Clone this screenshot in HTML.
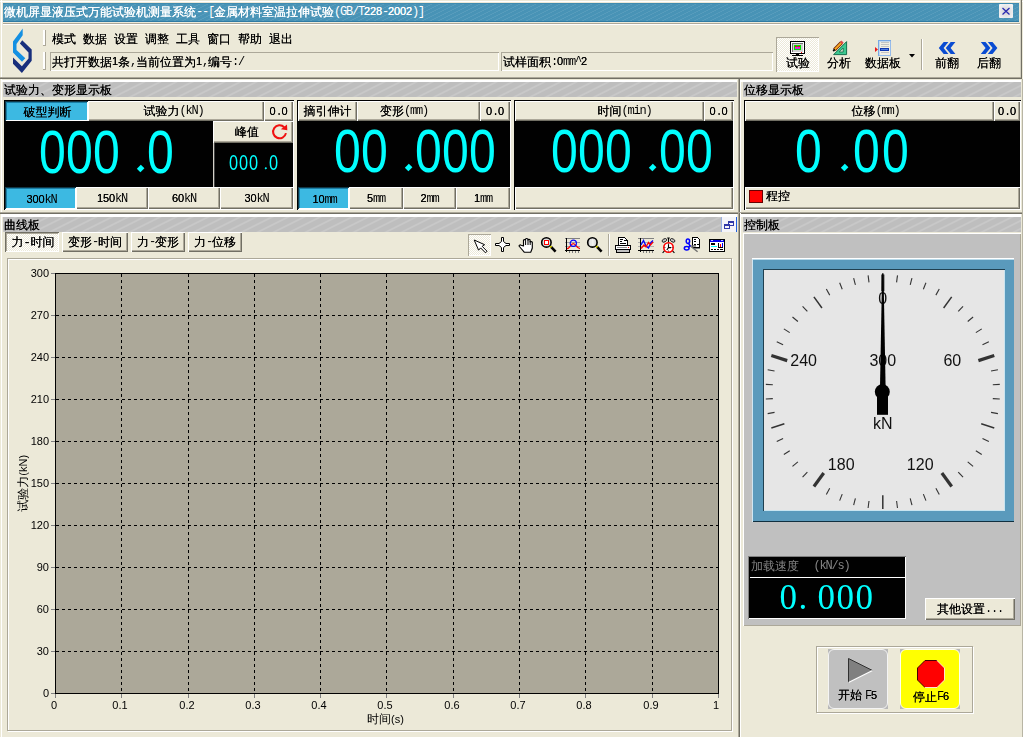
<!DOCTYPE html><html><head><meta charset="utf-8"><title>微机屏显液压式万能试验机测量系统</title><style>
html,body{margin:0;padding:0}
body{width:1023px;height:737px;background:#ece9d8;position:relative;overflow:hidden;opacity:.999;
 font:12px/12px "Liberation Mono","WenQuanYi Zen Hei","Noto Sans CJK SC",sans-serif;color:#000}
div,svg{position:absolute;box-sizing:border-box}
span.l{letter-spacing:-1.2px;position:relative;top:-1px;text-shadow:none}
span.d{font-family:"Liberation Sans",sans-serif;font-size:11px;letter-spacing:-.12px;text-shadow:0 0 0}
.t{white-space:nowrap;height:12px;line-height:12px;text-shadow:0 0 0}
.c{white-space:nowrap;text-align:center;line-height:12px;text-shadow:0 0 0}
.hdr{background:#bebebe repeating-linear-gradient(153.43deg,rgba(255,255,255,0) 0,rgba(255,255,255,0) 4.4px,rgba(255,255,255,.16) 5.4px,rgba(255,255,255,.16) 6.2px,rgba(255,255,255,0) 7.16px)}
.up{background:#ece9d8;box-shadow:inset 1px 1px #fff,inset -1px -1px #716f64,inset -2px -2px #aca899}
.dn{background:#3cb9e2;box-shadow:inset 1px 1px #103848,inset -1px -1px #fff,inset 2px 2px #1a7ea6}
.blk{background:#000}
.seg{color:#0ff;font-family:"Liberation Sans",sans-serif;white-space:nowrap;transform-origin:0 0}
</style></head><body>
<div class="" style="left:0px;top:1px;width:1023px;height:1px;background:#fff"></div>
<div class="" style="left:1px;top:0px;width:1px;height:737px;background:#fff"></div>
<div class="" style="left:1020px;top:0px;width:1px;height:79px;background:#d2cfbf"></div>
<div class="" style="left:1021px;top:0px;width:1px;height:79px;background:#716f64"></div>
<div class="" style="left:1022px;top:79px;width:1px;height:658px;background:#b8b5a4"></div>
<div class="" style="left:3px;top:3px;width:1016px;height:19px;background:#4893b6 repeating-linear-gradient(153.43deg,rgba(255,255,255,0) 0,rgba(255,255,255,0) 2.3px,rgba(255,255,255,.09) 2.9px,rgba(255,255,255,.09) 3.3px,rgba(255,255,255,0) 3.58px);box-shadow:inset 0 1px #3f8bb0,inset 0 -1px #2f7ba4"></div>
<div class="t" style="left:4px;top:6px;color:#fff">微机屏显液压式万能试验机测量系统<span class="l">--[</span>金属材料室温拉伸试验<span class="l">(GB/T<span class="d">228</span>-<span class="d">2002</span>)]</span></div>
<div class="" style="left:999px;top:4px;width:14px;height:14px;background:radial-gradient(circle at 50% 55%,#cfcfd2 0,#e4e4e6 45%,#fafafa 100%);border-radius:1px"><svg width="14" height="14" viewBox="0 0 14 14" style="left:0;top:0"><path d="M3.5 4 L10.5 10.5 M10.5 4 L3.5 10.5" stroke="#2828b0" stroke-width="1.25" fill="none"/></svg></div>
<div class="" style="left:3px;top:23px;width:1017px;height:1px;background:#aca899"></div>
<div class="" style="left:3px;top:24px;width:1017px;height:1px;background:#fff"></div>
<svg style="left:10px;top:26px" width="26" height="50" viewBox="10 26 26 50"><polygon points="22.7,28.6 22.7,35.2 16.5,44 16.5,50 25.3,58.2 22,61.7 13,52.6 13,41.4" fill="#1490e2"/><polygon points="22.2,40.2 31.7,49.4 31.7,60.8 21.9,73 13,63.8 13,57.6 21.9,66.2 28.5,58.6 28.5,52.4 19.9,43.6" fill="#182f7c"/></svg>
<div class="" style="left:43px;top:30px;width:2px;height:16px;background:#fff"></div>
<div class="" style="left:45px;top:30px;width:1px;height:16px;background:#aca899"></div>
<div class="" style="left:43px;top:45px;width:3px;height:1px;background:#aca899"></div>
<div class="" style="left:43px;top:52px;width:2px;height:18px;background:#fff"></div>
<div class="" style="left:45px;top:52px;width:1px;height:18px;background:#aca899"></div>
<div class="" style="left:43px;top:69px;width:3px;height:1px;background:#aca899"></div>
<div class="t" style="left:52px;top:34px;">模式</div>
<div class="t" style="left:83px;top:34px;">数据</div>
<div class="t" style="left:114px;top:34px;">设置</div>
<div class="t" style="left:145px;top:34px;">调整</div>
<div class="t" style="left:176px;top:34px;">工具</div>
<div class="t" style="left:207px;top:34px;">窗口</div>
<div class="t" style="left:238px;top:34px;">帮助</div>
<div class="t" style="left:269px;top:34px;">退出</div>
<div class="" style="left:50px;top:52px;width:449px;height:19px;box-shadow:inset 1px 1px #aca899,inset -1px -1px #fff;"></div>
<div class="t" style="left:52px;top:56px;">共打开数据<span class="l"><span class="d">1</span></span>条<span class="l">,</span>当前位置为<span class="l"><span class="d">1</span>,</span>编号<span class="l">:/</span></div>
<div class="" style="left:501px;top:52px;width:272px;height:19px;box-shadow:inset 1px 1px #aca899,inset -1px -1px #fff;"></div>
<div class="t" style="left:503px;top:56px;">试样面积<span class="l">:<span class="d">0</span>mm^<span class="d">2</span></span></div>
<div class="" style="left:776px;top:37px;width:43px;height:35px;background:repeating-conic-gradient(#fff 0 25%,#ece9d8 0 50%) 0 0/2px 2px;box-shadow:inset 1px 1px #aca899,inset -1px -1px #fff"></div>
<div class="t" style="left:786px;top:58px;">试验</div>
<div class="t" style="left:827px;top:58px;">分析</div>
<div class="t" style="left:865px;top:58px;">数据板</div>
<div class="t" style="left:935px;top:58px;">前翻</div>
<div class="t" style="left:977px;top:58px;">后翻</div>
<svg style="left:790px;top:41px" width="16" height="16" viewBox="0 0 16 16" shape-rendering="crispEdges"><rect x="0.5" y="0.5" width="14" height="12" fill="#fff" stroke="#000"/><rect x="2" y="2" width="11" height="9" fill="#707070"/><rect x="3" y="3" width="10" height="8" fill="#d0d0d0"/><rect x="4" y="4" width="7" height="5" fill="#00e000"/><rect x="5" y="5" width="2" height="1" fill="#f00"/><rect x="8" y="5" width="2" height="1" fill="#f00"/><rect x="5" y="6" width="5" height="2" fill="#e020e0"/><rect x="11" y="11" width="1" height="1" fill="#f00"/><rect x="6" y="13" width="3" height="1" fill="#000"/><rect x="2" y="14" width="11" height="1" fill="#000"/></svg>
<svg style="left:832px;top:40px" width="17" height="17" viewBox="0 0 17 17"><polygon points="14.6,1.6 14.6,14.6 1.6,14.6" fill="#3cc890" stroke="#187050" stroke-width="1"/><polygon points="11.2,8 11.2,12 7.2,12" fill="#ece9d8" stroke="#187050" stroke-width=".9"/><path d="M2.4 9.8 L9.6 2.6" stroke="#702000" stroke-width="3.6" stroke-linecap="butt"/><path d="M2.6 9.6 L9.4 2.8" stroke="#f8a820" stroke-width="2"/><path d="M1.2 11 L2.8 9.4" stroke="#000" stroke-width="1.8"/><path d="M9 3.2 L10.6 1.6" stroke="#e04848" stroke-width="3"/></svg>
<svg style="left:873px;top:40px" width="20" height="17" viewBox="0 0 20 17" shape-rendering="crispEdges"><rect x="5.5" y="0.5" width="12" height="15" fill="#f2efe4" stroke="#78a8e4"/><rect x="6" y="1" width="11" height="14" fill="none" stroke="#a8c8f0" stroke-width=".6"/><rect x="8" y="2" width="8" height="1" fill="#c4c4c4"/><rect x="8" y="4" width="8" height="1" fill="#c4c4c4"/><rect x="8" y="6" width="8" height="1" fill="#c4c4c4"/><rect x="8" y="12" width="8" height="1" fill="#c4c4c4"/><rect x="7" y="8" width="9" height="3" fill="#1038b0"/><rect x="8" y="9" width="7" height="1" fill="#5080e0"/><polygon points="2,7 2,12 5,9.5" fill="#e81818" shape-rendering="auto"/></svg>
<svg style="left:909px;top:54px" width="6" height="4" viewBox="0 0 6 4"><polygon points="0,0 6,0 3,3.5" fill="#000"/></svg>
<div class="" style="left:921px;top:39px;width:1px;height:31px;background:#aca899"></div>
<div class="" style="left:922px;top:39px;width:1px;height:31px;background:#fff"></div>
<svg style="left:938px;top:41px" width="19" height="14" viewBox="0 0 19 14"><g fill="#0a4cd2"><polygon points="5.7,0.9 10.4,0.9 5.6,7 10.4,13.1 5.7,13.1 0.8,7"/><polygon points="12.7,0.9 17.4,0.9 12.6,7 17.4,13.1 12.7,13.1 7.8,7"/></g></svg>
<svg style="left:980.4px;top:41px" width="19" height="14" viewBox="0 0 19 14"><g fill="#0a4cd2" transform="translate(18.2,0) scale(-1,1)"><polygon points="5.7,0.9 10.4,0.9 5.6,7 10.4,13.1 5.7,13.1 0.8,7"/><polygon points="12.7,0.9 17.4,0.9 12.6,7 17.4,13.1 12.7,13.1 7.8,7"/></g></svg>
<div class="" style="left:0px;top:77px;width:1021px;height:1px;background:#aca899"></div>
<div class="" style="left:0px;top:78px;width:1022px;height:1px;background:#716f64"></div>
<div class="" style="left:1px;top:80px;width:736px;height:2px;background:#fff"></div>
<div class="" style="left:1px;top:80px;width:1px;height:17px;background:#fff"></div>
<div class="hdr" style="left:3px;top:82px;width:734px;height:15px;"></div>
<div class="t" style="left:4px;top:85px;">试验力、变形显示板</div>
<div class="" style="left:740px;top:80px;width:281px;height:2px;background:#fff"></div>
<div class="" style="left:740px;top:80px;width:1px;height:17px;background:#fff"></div>
<div class="hdr" style="left:743px;top:82px;width:278px;height:15px;"></div>
<div class="t" style="left:744px;top:85px;">位移显示板</div>
<div class="" style="left:740px;top:80px;width:1px;height:132px;background:#fff"></div>
<div class="" style="left:738px;top:79px;width:1px;height:134px;background:#aca899"></div>
<div class="" style="left:739px;top:79px;width:1px;height:134px;background:#716f64"></div>
<div class="" style="left:4px;top:100px;width:290px;height:110px;background:#ece9d8;box-shadow:inset 1px 1px #000,inset -1px -1px #fff"></div>
<div class="blk" style="left:5px;top:121px;width:288px;height:66px;"></div>
<div class="dn" style="left:5px;top:101px;width:83px;height:20px;"><div class="c" style="left:-57.5px;top:6px;width:200px">破型判断</div></div>
<div class="up" style="left:88px;top:101px;width:176px;height:20px;"><div class="c" style="left:-14.5px;top:5px;width:200px">试验力<span class="l">(kN)</span></div></div>
<div class="up" style="left:264px;top:101px;width:29px;height:20px;"><div class="c" style="left:-85.5px;top:5px;width:200px"><span class="l"><span class="d">0</span>.<span class="d">0</span></span></div></div>
<div class="up" style="left:213px;top:121px;width:80px;height:22px;"></div>
<div class="t" style="left:235px;top:127px;">峰值</div>
<svg style="left:271px;top:123px" width="18" height="18" viewBox="0 0 18 18"><path d="M13.2 4.2 A6.5 6.5 0 1 0 14.96 10.15" fill="none" stroke="#f01010" stroke-width="2"/><polygon points="9.8,6.2 16,1.6 16.3,7.2" fill="#f01010"/></svg>
<div class="" style="left:213px;top:143px;width:80px;height:44px;background:#000;box-shadow:inset 1px 0 #d4d0c8,inset 2px 0 #404040"></div>
<div class="dn" style="left:5px;top:187px;width:71px;height:22px;"><div class="c" style="left:-63.5px;top:7px;width:200px"><span class="l"><span class="d">300</span>kN</span></div></div>
<div class="up" style="left:76px;top:187px;width:72px;height:22px;"><div class="c" style="left:-64px;top:6px;width:200px"><span class="l"><span class="d">150</span>kN</span></div></div>
<div class="up" style="left:148px;top:187px;width:72px;height:22px;"><div class="c" style="left:-64px;top:6px;width:200px"><span class="l"><span class="d">60</span>kN</span></div></div>
<div class="up" style="left:220px;top:187px;width:73px;height:22px;"><div class="c" style="left:-63.5px;top:6px;width:200px"><span class="l"><span class="d">30</span>kN</span></div></div>
<div class="seg" style="left:39.22px;top:120.93px;font-size:61.67px;line-height:61.67px;transform:scale(0.781,1)">0</div>
<div class="seg" style="left:66.22px;top:120.93px;font-size:61.67px;line-height:61.67px;transform:scale(0.781,1)">0</div>
<div class="seg" style="left:93.22px;top:120.93px;font-size:61.67px;line-height:61.67px;transform:scale(0.781,1)">0</div>
<div class="seg" style="left:132.67px;top:127.36px;font-size:52.38px;line-height:52.38px;transform-origin:7.33px 41.64px;transform:rotate(45deg)">.</div>
<div class="seg" style="left:147.22px;top:120.93px;font-size:61.67px;line-height:61.67px;transform:scale(0.781,1)">0</div>
<div class="seg" style="left:229.40px;top:151.88px;font-size:21.22px;line-height:21.22px;transform:scale(0.770,1)">0</div>
<div class="seg" style="left:239.40px;top:151.88px;font-size:21.22px;line-height:21.22px;transform:scale(0.770,1)">0</div>
<div class="seg" style="left:249.40px;top:151.88px;font-size:21.22px;line-height:21.22px;transform:scale(0.770,1)">0</div>
<div class="seg" style="left:263.10px;top:154.97px;font-size:17.14px;line-height:17.14px;transform-origin:2.40px 13.63px;transform:rotate(45deg)">.</div>
<div class="seg" style="left:269.40px;top:151.88px;font-size:21.22px;line-height:21.22px;transform:scale(0.770,1)">0</div>
<div class="" style="left:297px;top:100px;width:214px;height:110px;background:#ece9d8;box-shadow:inset 1px 1px #000,inset -1px -1px #fff"></div>
<div class="blk" style="left:298px;top:121px;width:212px;height:66px;"></div>
<div class="up" style="left:298px;top:101px;width:59px;height:20px;"><div class="c" style="left:-70.5px;top:5px;width:200px">摘引伸计</div></div>
<div class="up" style="left:357px;top:101px;width:123px;height:20px;"><div class="c" style="left:-53px;top:5px;width:200px">变形<span class="l">(mm)</span></div></div>
<div class="up" style="left:480px;top:101px;width:30px;height:20px;"><div class="c" style="left:-85px;top:5px;width:200px"><span class="l"><span class="d">0</span>.<span class="d">0</span></span></div></div>
<div class="dn" style="left:298px;top:187px;width:51px;height:22px;"><div class="c" style="left:-73.5px;top:7px;width:200px"><span class="l"><span class="d">10</span>mm</span></div></div>
<div class="up" style="left:349px;top:187px;width:54px;height:22px;"><div class="c" style="left:-73px;top:6px;width:200px"><span class="l"><span class="d">5</span>mm</span></div></div>
<div class="up" style="left:403px;top:187px;width:53px;height:22px;"><div class="c" style="left:-73.5px;top:6px;width:200px"><span class="l"><span class="d">2</span>mm</span></div></div>
<div class="up" style="left:456px;top:187px;width:54px;height:22px;"><div class="c" style="left:-73px;top:6px;width:200px"><span class="l"><span class="d">1</span>mm</span></div></div>
<div class="seg" style="left:334.22px;top:119.93px;font-size:61.67px;line-height:61.67px;transform:scale(0.781,1)">0</div>
<div class="seg" style="left:361.22px;top:119.93px;font-size:61.67px;line-height:61.67px;transform:scale(0.781,1)">0</div>
<div class="seg" style="left:400.67px;top:126.36px;font-size:52.38px;line-height:52.38px;transform-origin:7.33px 41.64px;transform:rotate(45deg)">.</div>
<div class="seg" style="left:415.22px;top:119.93px;font-size:61.67px;line-height:61.67px;transform:scale(0.781,1)">0</div>
<div class="seg" style="left:442.22px;top:119.93px;font-size:61.67px;line-height:61.67px;transform:scale(0.781,1)">0</div>
<div class="seg" style="left:469.22px;top:119.93px;font-size:61.67px;line-height:61.67px;transform:scale(0.781,1)">0</div>
<div class="" style="left:514px;top:100px;width:220px;height:110px;background:#ece9d8;box-shadow:inset 1px 1px #000,inset -1px -1px #fff"></div>
<div class="blk" style="left:515px;top:121px;width:218px;height:66px;"></div>
<div class="up" style="left:515px;top:101px;width:189px;height:20px;"><div class="c" style="left:9.5px;top:5px;width:200px">时间<span class="l">(min)</span></div></div>
<div class="up" style="left:704px;top:101px;width:29px;height:20px;"><div class="c" style="left:-85.5px;top:5px;width:200px"><span class="l"><span class="d">0</span>.<span class="d">0</span></span></div></div>
<div class="up" style="left:515px;top:187px;width:218px;height:22px;"></div>
<div class="seg" style="left:551.22px;top:119.93px;font-size:61.67px;line-height:61.67px;transform:scale(0.781,1)">0</div>
<div class="seg" style="left:578.22px;top:119.93px;font-size:61.67px;line-height:61.67px;transform:scale(0.781,1)">0</div>
<div class="seg" style="left:605.22px;top:119.93px;font-size:61.67px;line-height:61.67px;transform:scale(0.781,1)">0</div>
<div class="seg" style="left:644.67px;top:126.36px;font-size:52.38px;line-height:52.38px;transform-origin:7.33px 41.64px;transform:rotate(45deg)">.</div>
<div class="seg" style="left:659.22px;top:119.93px;font-size:61.67px;line-height:61.67px;transform:scale(0.781,1)">0</div>
<div class="seg" style="left:686.22px;top:119.93px;font-size:61.67px;line-height:61.67px;transform:scale(0.781,1)">0</div>
<div class="" style="left:744px;top:100px;width:277px;height:110px;background:#ece9d8;box-shadow:inset 1px 1px #000,inset -1px -1px #fff"></div>
<div class="blk" style="left:745px;top:121px;width:275px;height:66px;"></div>
<div class="up" style="left:745px;top:101px;width:249px;height:20px;"><div class="c" style="left:30.5px;top:5px;width:200px">位移<span class="l">(mm)</span></div></div>
<div class="up" style="left:994px;top:101px;width:26px;height:20px;"><div class="c" style="left:-87px;top:5px;width:200px"><span class="l"><span class="d">0</span>.<span class="d">0</span></span></div></div>
<div class="up" style="left:745px;top:187px;width:275px;height:22px;"></div>
<div class="" style="left:749px;top:190px;width:14px;height:13px;background:#f00;border:1px solid #600"></div>
<div class="t" style="left:766px;top:191px;">程控</div>
<div class="seg" style="left:795.22px;top:119.93px;font-size:61.67px;line-height:61.67px;transform:scale(0.781,1)">0</div>
<div class="seg" style="left:836.67px;top:126.36px;font-size:52.38px;line-height:52.38px;transform-origin:7.33px 41.64px;transform:rotate(45deg)">.</div>
<div class="seg" style="left:853.22px;top:119.93px;font-size:61.67px;line-height:61.67px;transform:scale(0.781,1)">0</div>
<div class="seg" style="left:882.22px;top:119.93px;font-size:61.67px;line-height:61.67px;transform:scale(0.781,1)">0</div>
<div class="" style="left:0px;top:212px;width:1022px;height:1px;background:#aca899"></div>
<div class="" style="left:0px;top:213px;width:1022px;height:1px;background:#716f64"></div>
<div class="" style="left:1px;top:214px;width:736px;height:3px;background:#fff"></div>
<div class="" style="left:1px;top:215px;width:1px;height:17px;background:#fff"></div>
<div class="hdr" style="left:3px;top:217px;width:734px;height:15px;"></div>
<div class="t" style="left:4px;top:220px;">曲线板</div>
<div class="" style="left:738px;top:213px;width:1px;height:524px;background:#aca899"></div>
<div class="" style="left:739px;top:213px;width:1px;height:524px;background:#716f64"></div>
<div class="" style="left:740px;top:213px;width:1px;height:524px;background:#fff"></div>
<div class="" style="left:721px;top:217px;width:16px;height:15px;background:#f4f4f8;border-right:1px solid #2060e0;border-left:1px solid #9ab0e0"><svg style="left:2px;top:2px" width="12" height="11" viewBox="0 0 12 11" shape-rendering="crispEdges"><g fill="none" stroke="#3038a8"><rect x="4.5" y="2.5" width="5" height="4" stroke-width="1"/><rect x="4" y="2" width="6" height="2" fill="#3038a8" stroke="none"/><rect x="0.5" y="5.5" width="5" height="4" fill="#f4f4f8"/><rect x="0" y="5" width="6" height="2" fill="#3038a8" stroke="none"/></g></svg></div>
<div class="" style="left:5px;top:232px;width:54px;height:20px;background:repeating-conic-gradient(#fff 0 25%,#ece9d8 0 50%) 0 0/2px 2px;box-shadow:inset 1px 1px #716f64,inset -1px -1px #fff,inset 2px 2px #aca899"><div class="c" style="left:1px;top:5px;width:54px">力-时间</div></div>
<div class="up" style="left:62px;top:232px;width:66px;height:20px;"><div class="c" style="left:-67px;top:5px;width:200px">变形<span class="l">-</span>时间</div></div>
<div class="up" style="left:131px;top:232px;width:54px;height:20px;"><div class="c" style="left:-73px;top:5px;width:200px">力<span class="l">-</span>变形</div></div>
<div class="up" style="left:188px;top:232px;width:54px;height:20px;"><div class="c" style="left:-73px;top:5px;width:200px">力<span class="l">-</span>位移</div></div>
<div class="" style="left:468px;top:234px;width:23px;height:22px;background:repeating-conic-gradient(#fff 0 25%,#ece9d8 0 50%) 0 0/2px 2px;box-shadow:inset 1px 1px #aca899,inset -1px -1px #fff"></div>
<svg style="left:472px;top:238px" width="17" height="17" viewBox="0 0 17 17"><path d="M2.2,2 L12.6,6.7 L10.2,8.3 L15,13.2 L13.5,14.8 L8.6,9.9 L6.6,12.2 Z" fill="#fff" stroke="#000" stroke-width="1" stroke-linejoin="miter"/></svg>
<svg style="left:494px;top:236px" width="18" height="18" viewBox="0 0 18 18"><path d="M7.5,1.5 h2 v4 l2.5,2 h3.5 v2 h-3.5 l-2.5,2 v4 h-2 v-4 l-2.5,-2 h-3.5 v-2 h3.5 l2.5,-2 z" fill="#fff" stroke="#000" stroke-width="1"/></svg>
<svg style="left:517px;top:237px" width="18" height="17" viewBox="0 0 18 17"><path d="M6.5,9 V3.2 q1,-1.2 2,0 V2.2 q1.2,-1.4 2.4,0 V3 q1.1,-1.2 2.2,0 V5 q1.2,-1 2.2,0.2 V11 q-0.6,2 -1.6,4.2 H7.2 Q5,12.5 2,9 q0.6,-1.6 2.2,-0.8 Z" fill="#fff" stroke="#000" stroke-width="1.15" stroke-linejoin="round"/><path d="M8.6,3.4 V8 M11,3 V8 M13.2,4 V8" stroke="#000" stroke-width="1" fill="none"/></svg>
<svg style="left:540px;top:236px" width="18" height="18" viewBox="0 0 18 18"><path d="M10.8,10.6 L15.6,15.6" stroke="#000" stroke-width="2.6"/><path d="M9.8,9.8 L11.4,11.4" stroke="#e8e000" stroke-width="2"/><circle cx="6.4" cy="6.4" r="4.7" fill="#dcdcdc" stroke="#000" stroke-width="1.6"/><rect x="4.5" y="4.5" width="4" height="4" fill="#fff" stroke="#f00" stroke-width="1" shape-rendering="crispEdges"/></svg>
<svg style="left:564px;top:237px" width="18" height="17" viewBox="0 0 18 17"><g shape-rendering="crispEdges"><rect x="1" y="1" width="15" height="1" fill="#808080"/><rect x="1" y="5" width="15" height="1" fill="#a0a0a0"/><rect x="1" y="9" width="15" height="1" fill="#a0a0a0"/><rect x="2" y="1" width="1" height="14" fill="#000"/><rect x="1" y="13" width="15" height="1" fill="#000"/><rect x="5" y="14" width="1" height="2" fill="#808080"/><rect x="8" y="14" width="1" height="2" fill="#808080"/><rect x="11" y="14" width="1" height="2" fill="#808080"/><rect x="14" y="14" width="1" height="2" fill="#808080"/></g><path d="M3,11.6 C6,11.6 6.5,6.6 9.3,6.6 S12.5,11.6 16,11.6" fill="none" stroke="#f00" stroke-width="1.3"/><circle cx="9.3" cy="6.3" r="3.1" fill="none" stroke="#00f" stroke-width="1.2"/></svg>
<svg style="left:586.3px;top:236px" width="18" height="18" viewBox="0 0 18 18"><path d="M10.8,10.6 L15.6,15.6" stroke="#000" stroke-width="2.6"/><path d="M9.8,9.8 L11.4,11.4" stroke="#e8e000" stroke-width="2"/><circle cx="6.4" cy="6.4" r="4.7" fill="#dcdcdc" stroke="#000" stroke-width="1.6"/><path d="M5,3.5 V9.3 M6.4,2.8 V10 M7.8,3.5 V9.3" stroke="#fff" stroke-width=".7"/></svg>
<div class="" style="left:608px;top:234px;width:1px;height:22px;background:#aca899"></div>
<div class="" style="left:609px;top:234px;width:1px;height:22px;background:#fff"></div>
<svg style="left:615px;top:237px" width="17" height="17" viewBox="0 0 17 17"><g shape-rendering="crispEdges"><polygon points="3.5,0.5 9.5,0.5 12.5,3.5 12.5,8.5 3.5,8.5" fill="#fff" stroke="#000"/><rect x="5" y="2" width="3" height="1" fill="#000"/><rect x="5" y="4" width="2" height="1" fill="#000"/><rect x="5" y="6" width="6" height="1" fill="#000"/><rect x="9" y="3" width="3" height="1" fill="#000"/><rect x="0.5" y="8.5" width="15" height="4" fill="#fff" stroke="#000"/><rect x="2" y="10" width="10" height="1" fill="#909090"/><rect x="13" y="10" width="1" height="1" fill="#f00"/><rect x="1.5" y="12.5" width="13" height="3" fill="#c0c0c0" stroke="#000"/></g></svg>
<svg style="left:638px;top:237px" width="18" height="17" viewBox="0 0 18 17"><g shape-rendering="crispEdges"><rect x="0" y="1" width="16" height="1" fill="#808080"/><rect x="0" y="5" width="16" height="1" fill="#b0b0b0"/><rect x="0" y="9" width="16" height="1" fill="#b0b0b0"/><rect x="2" y="1" width="1" height="14" fill="#000"/><rect x="0" y="13" width="16" height="1" fill="#000"/><rect x="5" y="14" width="1" height="2" fill="#808080"/><rect x="8" y="14" width="1" height="2" fill="#808080"/><rect x="11" y="14" width="1" height="2" fill="#808080"/><rect x="14" y="14" width="1" height="2" fill="#808080"/></g><path d="M3,8 L5.5,3.5 L8,9 L10.5,11 L13,5.5 L15,3.5" fill="none" stroke="#00f" stroke-width="1.3"/><path d="M3,11.5 L6,8 L8,10 L10.5,5.5 L12.5,8 L15,5" fill="none" stroke="#f00" stroke-width="1.3"/></svg>
<svg style="left:660px;top:237px" width="18" height="17" viewBox="0 0 18 17"><ellipse cx="4.4" cy="3.4" rx="2.5" ry="1.5" transform="rotate(-28 4.4 3.4)" fill="#c4c4c4" stroke="#000" stroke-width=".8"/><ellipse cx="12.6" cy="3.4" rx="2.5" ry="1.5" transform="rotate(28 12.6 3.4)" fill="#c4c4c4" stroke="#000" stroke-width=".8"/><path d="M8.5,1 V5 M7.2,1 H9.8 M2.6,16 L4.6,13.6 M14.4,16 L12.4,13.6" stroke="#000" stroke-width="1.1"/><circle cx="8.5" cy="10.5" r="4.7" fill="#fff" stroke="#f00" stroke-width="1.6"/><path d="M8.5,7.2 V10.6 L11,10.6 M8.5,10.6 L6.8,13" stroke="#000" stroke-width="1.1" fill="none"/><path d="M8.5,6.6 v.8 M8.5,13.6 v.8 M4.6,10.5 h.8 M11.6,10.5 h.8" stroke="#000" stroke-width=".9"/></svg>
<svg style="left:683px;top:236px" width="18" height="17" viewBox="0 0 18 17"><g shape-rendering="crispEdges"><polygon points="9.5,1.5 14.5,1.5 16.5,3.5 16.5,11.5 9.5,11.5" fill="#fff" stroke="#000"/><rect x="11" y="3" width="2" height="1" fill="#000"/><rect x="11" y="5" width="2" height="1" fill="#000"/><rect x="11" y="8" width="2" height="1" fill="#000"/><rect x="14" y="8" width="2" height="1" fill="#000"/><rect x="10" y="12" width="7" height="1" fill="#808080"/></g><path d="M6.5,9.2 L14.6,15.8 M6.5,10.2 L13,9.8" stroke="#707070" stroke-width="1.4"/><ellipse cx="4.9" cy="5.3" rx="1.7" ry="2.2" fill="none" stroke="#00f" stroke-width="1.5"/><ellipse cx="3.7" cy="12.2" rx="2.4" ry="1.7" fill="none" stroke="#00f" stroke-width="1.5"/><path d="M5.6,7.4 L7,9.8 L5.8,11" stroke="#00f" stroke-width="1.5" fill="none"/></svg>
<svg style="left:709px;top:239px" width="16" height="13" viewBox="0 0 16 13" shape-rendering="crispEdges"><rect x="0.5" y="0.5" width="15" height="12" fill="#fff" stroke="#000"/><rect x="1" y="1" width="14" height="2" fill="#0000f0"/><rect x="2" y="1" width="2" height="1" fill="#c0c0ff"/><rect x="12" y="1" width="2" height="1" fill="#c0c0ff"/><rect x="2" y="4" width="4" height="2" fill="#000"/><rect x="2" y="7" width="6" height="1" fill="#0ff"/><rect x="9" y="4" width="1" height="4" fill="#000"/><rect x="9" y="8" width="5" height="1" fill="#000"/><rect x="11" y="5" width="1" height="3" fill="#f00"/><rect x="13" y="4" width="1" height="4" fill="#00f"/><rect x="2" y="10" width="2" height="1" fill="#000"/><rect x="5" y="10" width="2" height="1" fill="#000"/><rect x="8" y="10" width="2" height="1" fill="#000"/><rect x="11" y="10" width="3" height="1" fill="#000"/></svg>
<div class="" style="left:8px;top:259px;width:725px;height:473px;border:1px solid #fff"></div>
<div class="" style="left:7px;top:258px;width:725px;height:473px;border:1px solid #aca899"></div>
<svg style="left:0;top:0" width="738" height="737" viewBox="0 0 738 737" font-family="'Liberation Sans',sans-serif" font-size="11px" fill="#000" shape-rendering="crispEdges"><rect x="55" y="273" width="663" height="420" fill="#aca899"/><line x1="121.5" y1="274" x2="121.5" y2="693" stroke="#000" stroke-width="1" stroke-dasharray="3 3"/><line x1="56" y1="315.5" x2="718" y2="315.5" stroke="#000" stroke-width="1" stroke-dasharray="3 3"/><line x1="188.5" y1="274" x2="188.5" y2="693" stroke="#000" stroke-width="1" stroke-dasharray="3 3"/><line x1="56" y1="357.5" x2="718" y2="357.5" stroke="#000" stroke-width="1" stroke-dasharray="3 3"/><line x1="254.5" y1="274" x2="254.5" y2="693" stroke="#000" stroke-width="1" stroke-dasharray="3 3"/><line x1="56" y1="399.5" x2="718" y2="399.5" stroke="#000" stroke-width="1" stroke-dasharray="3 3"/><line x1="320.5" y1="274" x2="320.5" y2="693" stroke="#000" stroke-width="1" stroke-dasharray="3 3"/><line x1="56" y1="441.5" x2="718" y2="441.5" stroke="#000" stroke-width="1" stroke-dasharray="3 3"/><line x1="386.5" y1="274" x2="386.5" y2="693" stroke="#000" stroke-width="1" stroke-dasharray="3 3"/><line x1="56" y1="483.5" x2="718" y2="483.5" stroke="#000" stroke-width="1" stroke-dasharray="3 3"/><line x1="453.5" y1="274" x2="453.5" y2="693" stroke="#000" stroke-width="1" stroke-dasharray="3 3"/><line x1="56" y1="525.5" x2="718" y2="525.5" stroke="#000" stroke-width="1" stroke-dasharray="3 3"/><line x1="519.5" y1="274" x2="519.5" y2="693" stroke="#000" stroke-width="1" stroke-dasharray="3 3"/><line x1="56" y1="567.5" x2="718" y2="567.5" stroke="#000" stroke-width="1" stroke-dasharray="3 3"/><line x1="585.5" y1="274" x2="585.5" y2="693" stroke="#000" stroke-width="1" stroke-dasharray="3 3"/><line x1="56" y1="609.5" x2="718" y2="609.5" stroke="#000" stroke-width="1" stroke-dasharray="3 3"/><line x1="652.5" y1="274" x2="652.5" y2="693" stroke="#000" stroke-width="1" stroke-dasharray="3 3"/><line x1="56" y1="651.5" x2="718" y2="651.5" stroke="#000" stroke-width="1" stroke-dasharray="3 3"/><rect x="55.5" y="273.5" width="663" height="420" fill="none" stroke="#000" stroke-width="1"/><line x1="51" y1="273.5" x2="55" y2="273.5" stroke="#808080" stroke-width="1"/><text x="49" y="277.1" text-anchor="end">300</text><line x1="55.5" y1="694" x2="55.5" y2="698" stroke="#808080" stroke-width="1"/><text x="54" y="708.5" text-anchor="middle">0</text><line x1="51" y1="315.5" x2="55" y2="315.5" stroke="#808080" stroke-width="1"/><text x="49" y="319.1" text-anchor="end">270</text><line x1="121.5" y1="694" x2="121.5" y2="698" stroke="#808080" stroke-width="1"/><text x="120" y="708.5" text-anchor="middle">0.1</text><line x1="51" y1="357.5" x2="55" y2="357.5" stroke="#808080" stroke-width="1"/><text x="49" y="361.1" text-anchor="end">240</text><line x1="188.5" y1="694" x2="188.5" y2="698" stroke="#808080" stroke-width="1"/><text x="187" y="708.5" text-anchor="middle">0.2</text><line x1="51" y1="399.5" x2="55" y2="399.5" stroke="#808080" stroke-width="1"/><text x="49" y="403.1" text-anchor="end">210</text><line x1="254.5" y1="694" x2="254.5" y2="698" stroke="#808080" stroke-width="1"/><text x="253" y="708.5" text-anchor="middle">0.3</text><line x1="51" y1="441.5" x2="55" y2="441.5" stroke="#808080" stroke-width="1"/><text x="49" y="445.1" text-anchor="end">180</text><line x1="320.5" y1="694" x2="320.5" y2="698" stroke="#808080" stroke-width="1"/><text x="319" y="708.5" text-anchor="middle">0.4</text><line x1="51" y1="483.5" x2="55" y2="483.5" stroke="#808080" stroke-width="1"/><text x="49" y="487.1" text-anchor="end">150</text><line x1="386.5" y1="694" x2="386.5" y2="698" stroke="#808080" stroke-width="1"/><text x="385" y="708.5" text-anchor="middle">0.5</text><line x1="51" y1="525.5" x2="55" y2="525.5" stroke="#808080" stroke-width="1"/><text x="49" y="529.1" text-anchor="end">120</text><line x1="453.5" y1="694" x2="453.5" y2="698" stroke="#808080" stroke-width="1"/><text x="452" y="708.5" text-anchor="middle">0.6</text><line x1="51" y1="567.5" x2="55" y2="567.5" stroke="#808080" stroke-width="1"/><text x="49" y="571.1" text-anchor="end">90</text><line x1="519.5" y1="694" x2="519.5" y2="698" stroke="#808080" stroke-width="1"/><text x="518" y="708.5" text-anchor="middle">0.7</text><line x1="51" y1="609.5" x2="55" y2="609.5" stroke="#808080" stroke-width="1"/><text x="49" y="613.1" text-anchor="end">60</text><line x1="585.5" y1="694" x2="585.5" y2="698" stroke="#808080" stroke-width="1"/><text x="584" y="708.5" text-anchor="middle">0.8</text><line x1="51" y1="651.5" x2="55" y2="651.5" stroke="#808080" stroke-width="1"/><text x="49" y="655.1" text-anchor="end">30</text><line x1="652.5" y1="694" x2="652.5" y2="698" stroke="#808080" stroke-width="1"/><text x="651" y="708.5" text-anchor="middle">0.9</text><line x1="51" y1="693.5" x2="55" y2="693.5" stroke="#808080" stroke-width="1"/><text x="49" y="697.1" text-anchor="end">0</text><line x1="718.5" y1="694" x2="718.5" y2="698" stroke="#808080" stroke-width="1"/><text x="716" y="708.5" text-anchor="middle">1</text><text x="385.5" y="723" text-anchor="middle" style="font-family:'Liberation Sans','WenQuanYi Zen Hei','Noto Sans CJK SC',sans-serif"><tspan font-size="12px">时间</tspan>(s)</text><text transform="translate(26.5,483.3) rotate(-90)" text-anchor="middle" style="font-family:'Liberation Sans','WenQuanYi Zen Hei','Noto Sans CJK SC',sans-serif"><tspan font-size="12px">试验力</tspan>(kN)</text></svg>
<div class="" style="left:740px;top:214px;width:281px;height:3px;background:#fff"></div>
<div class="" style="left:740px;top:215px;width:1px;height:17px;background:#fff"></div>
<div class="hdr" style="left:743px;top:217px;width:278px;height:15px;"></div>
<div class="t" style="left:744px;top:220px;">控制板</div>
<div class="" style="left:743px;top:233px;width:278px;height:393px;background:#c0c0c0;box-shadow:inset 1px 1px #fff,inset -1px -1px #aca899"></div>
<div class="" style="left:752px;top:258px;width:262px;height:264px;background:#5a9abc;box-shadow:inset 0 1px #fff,inset 1px 0 #cfe6f2,inset 0 -1px #103040,inset 0 2px #b8daea"></div>
<div class="" style="left:763px;top:269px;width:242px;height:242px;background:#e6e6e6;box-shadow:inset 1px 1px #204050,inset -1px -1px #c8e4f0"></div>
<svg style="left:764px;top:270px" width="241" height="240" viewBox="764 270 241 240" font-family="'Liberation Sans',sans-serif" font-size="16px" fill="#111"><g stroke="#333"><line x1="882.80" y1="291.20" x2="882.80" y2="274.50" stroke-width="3.2"/><line x1="896.61" y1="282.37" x2="897.49" y2="275.42" stroke-width="1.1"/><line x1="910.21" y1="284.96" x2="911.95" y2="278.18" stroke-width="1.1"/><line x1="923.37" y1="289.24" x2="925.94" y2="282.73" stroke-width="1.1"/><line x1="935.89" y1="295.13" x2="939.26" y2="289.00" stroke-width="1.1"/><line x1="943.64" y1="307.97" x2="951.69" y2="296.88" stroke-width="1.5"/><line x1="958.24" y1="311.37" x2="963.03" y2="306.26" stroke-width="1.1"/><line x1="967.71" y1="321.46" x2="973.10" y2="316.99" stroke-width="1.1"/><line x1="975.84" y1="332.65" x2="981.76" y2="328.90" stroke-width="1.1"/><line x1="982.51" y1="344.78" x2="988.85" y2="341.80" stroke-width="1.1"/><line x1="978.38" y1="360.64" x2="994.26" y2="355.48" stroke-width="3.2"/><line x1="991.05" y1="371.05" x2="997.92" y2="369.74" stroke-width="1.1"/><line x1="992.78" y1="384.78" x2="999.77" y2="384.34" stroke-width="1.1"/><line x1="992.78" y1="398.62" x2="999.77" y2="399.06" stroke-width="1.1"/><line x1="991.05" y1="412.35" x2="997.92" y2="413.66" stroke-width="1.1"/><line x1="981.23" y1="423.68" x2="994.26" y2="427.92" stroke-width="1.5"/><line x1="982.51" y1="438.62" x2="988.85" y2="441.60" stroke-width="1.1"/><line x1="975.84" y1="450.75" x2="981.76" y2="454.50" stroke-width="1.1"/><line x1="967.71" y1="461.94" x2="973.10" y2="466.41" stroke-width="1.1"/><line x1="958.24" y1="472.03" x2="963.03" y2="477.14" stroke-width="1.1"/><line x1="941.87" y1="473.01" x2="951.69" y2="486.52" stroke-width="3.2"/><line x1="935.89" y1="488.27" x2="939.26" y2="494.40" stroke-width="1.1"/><line x1="923.37" y1="494.16" x2="925.94" y2="500.67" stroke-width="1.1"/><line x1="910.21" y1="498.44" x2="911.95" y2="505.22" stroke-width="1.1"/><line x1="896.61" y1="501.03" x2="897.49" y2="507.98" stroke-width="1.1"/><line x1="882.80" y1="495.20" x2="882.80" y2="508.90" stroke-width="1.5"/><line x1="868.99" y1="501.03" x2="868.11" y2="507.98" stroke-width="1.1"/><line x1="855.39" y1="498.44" x2="853.65" y2="505.22" stroke-width="1.1"/><line x1="842.23" y1="494.16" x2="839.66" y2="500.67" stroke-width="1.1"/><line x1="829.71" y1="488.27" x2="826.34" y2="494.40" stroke-width="1.1"/><line x1="823.73" y1="473.01" x2="813.91" y2="486.52" stroke-width="3.2"/><line x1="807.36" y1="472.03" x2="802.57" y2="477.14" stroke-width="1.1"/><line x1="797.89" y1="461.94" x2="792.50" y2="466.41" stroke-width="1.1"/><line x1="789.76" y1="450.75" x2="783.84" y2="454.50" stroke-width="1.1"/><line x1="783.09" y1="438.62" x2="776.75" y2="441.60" stroke-width="1.1"/><line x1="784.37" y1="423.68" x2="771.34" y2="427.92" stroke-width="1.5"/><line x1="774.55" y1="412.35" x2="767.68" y2="413.66" stroke-width="1.1"/><line x1="772.82" y1="398.62" x2="765.83" y2="399.06" stroke-width="1.1"/><line x1="772.82" y1="384.78" x2="765.83" y2="384.34" stroke-width="1.1"/><line x1="774.55" y1="371.05" x2="767.68" y2="369.74" stroke-width="1.1"/><line x1="787.22" y1="360.64" x2="771.34" y2="355.48" stroke-width="3.2"/><line x1="783.09" y1="344.78" x2="776.75" y2="341.80" stroke-width="1.1"/><line x1="789.76" y1="332.65" x2="783.84" y2="328.90" stroke-width="1.1"/><line x1="797.89" y1="321.46" x2="792.50" y2="316.99" stroke-width="1.1"/><line x1="807.36" y1="311.37" x2="802.57" y2="306.26" stroke-width="1.1"/><line x1="821.96" y1="307.97" x2="813.91" y2="296.88" stroke-width="1.5"/><line x1="829.71" y1="295.13" x2="826.34" y2="289.00" stroke-width="1.1"/><line x1="842.23" y1="289.24" x2="839.66" y2="282.73" stroke-width="1.1"/><line x1="855.39" y1="284.96" x2="853.65" y2="278.18" stroke-width="1.1"/><line x1="868.99" y1="282.37" x2="868.11" y2="275.42" stroke-width="1.1"/></g><text x="882.7" y="304.2" text-anchor="middle">0</text><text x="952.3" y="365.7" text-anchor="middle">60</text><text x="920.2" y="469.7" text-anchor="middle">120</text><text x="841.2" y="469.7" text-anchor="middle">180</text><text x="803.6" y="365.7" text-anchor="middle">240</text><text x="882.8" y="365.7" text-anchor="middle">300</text><text x="882.8" y="429" text-anchor="middle">kN</text><polygon points="882.1,273.2 883.5,273.2 885.7,392 879.9,392" fill="#000"/><circle cx="882.3" cy="391.7" r="7.5" fill="#000"/><rect x="877" y="392" width="11" height="22.8" fill="#000"/></svg>
<div class="" style="left:748px;top:556px;width:158px;height:63px;background:#000;box-shadow:inset 1px 1px #808080,inset -1px -1px #fff"></div>
<div class="t" style="left:751px;top:561px;color:#858585;white-space:pre;text-shadow:none">加载速度  <span class="l">(kN/s)</span></div>
<div class="" style="left:750px;top:577px;width:155px;height:1px;background:#fff"></div>
<div style="left:779.6px;top:579.6px;width:100px;height:35px;line-height:35px;font-family:'Liberation Serif','Noto Serif CJK SC',serif;font-size:35px;color:#0ff;white-space:nowrap;letter-spacing:1.5px">0<span style="display:inline-block;width:19px">.</span>000</div>
<div class="up" style="left:925px;top:598px;width:90px;height:22px;"><div class="c" style="left:-55px;top:6px;width:200px">其他设置<span class="l">...</span></div></div>
<div class="" style="left:817px;top:647px;width:157px;height:67px;border:1px solid #fff"></div>
<div class="" style="left:816px;top:646px;width:157px;height:67px;border:1px solid #aca899"></div>
<div class="" style="left:828px;top:649px;width:60px;height:60px;background:#b8b8b8"></div>
<div class="" style="left:828px;top:649px;width:60px;height:60px;background:#c0c0c0;border-radius:6px;border:1px solid #f4f4f4"></div>
<svg style="left:846px;top:656px" width="30" height="30" viewBox="0 0 30 30"><polygon points="2.5,2.5 2.5,26.5 26.5,14.5" fill="#808080"/><path d="M2.5,26.5 L2.5,2.5 L26.5,14.5" fill="none" stroke="#303030" stroke-width="1"/><path d="M26.5,14.5 L2.5,26.5" fill="none" stroke="#fff" stroke-width="1.2"/></svg>
<div class="t" style="left:838px;top:690px;">开始</div>
<div class="t" style="left:865px;top:690px;"><span class="l">F<span class="d">5</span></span></div>
<div class="" style="left:900px;top:649px;width:60px;height:60px;background:#b8b8b8"></div>
<div class="" style="left:900px;top:649px;width:60px;height:60px;background:#ff0;border-radius:6px;border:1px solid #fffff0"></div>
<svg style="left:915px;top:658px" width="32" height="32" viewBox="0 0 32 32"><polygon points="10,2.5 22,2.5 29.5,10 29.5,22 22,29.5 10,29.5 2.5,22 2.5,10" fill="#f00"/><path d="M10,29.5 L2.5,22 L2.5,10 L10,2.5 L22,2.5" fill="none" stroke="#400" stroke-width="1"/><path d="M22,2.5 L29.5,10 L29.5,22 L22,29.5 L10,29.5" fill="none" stroke="#fff" stroke-width="1" opacity=".8"/></svg>
<div class="t" style="left:913px;top:691px;">停止<span class="l">F<span class="d">6</span></span></div>
</body></html>
